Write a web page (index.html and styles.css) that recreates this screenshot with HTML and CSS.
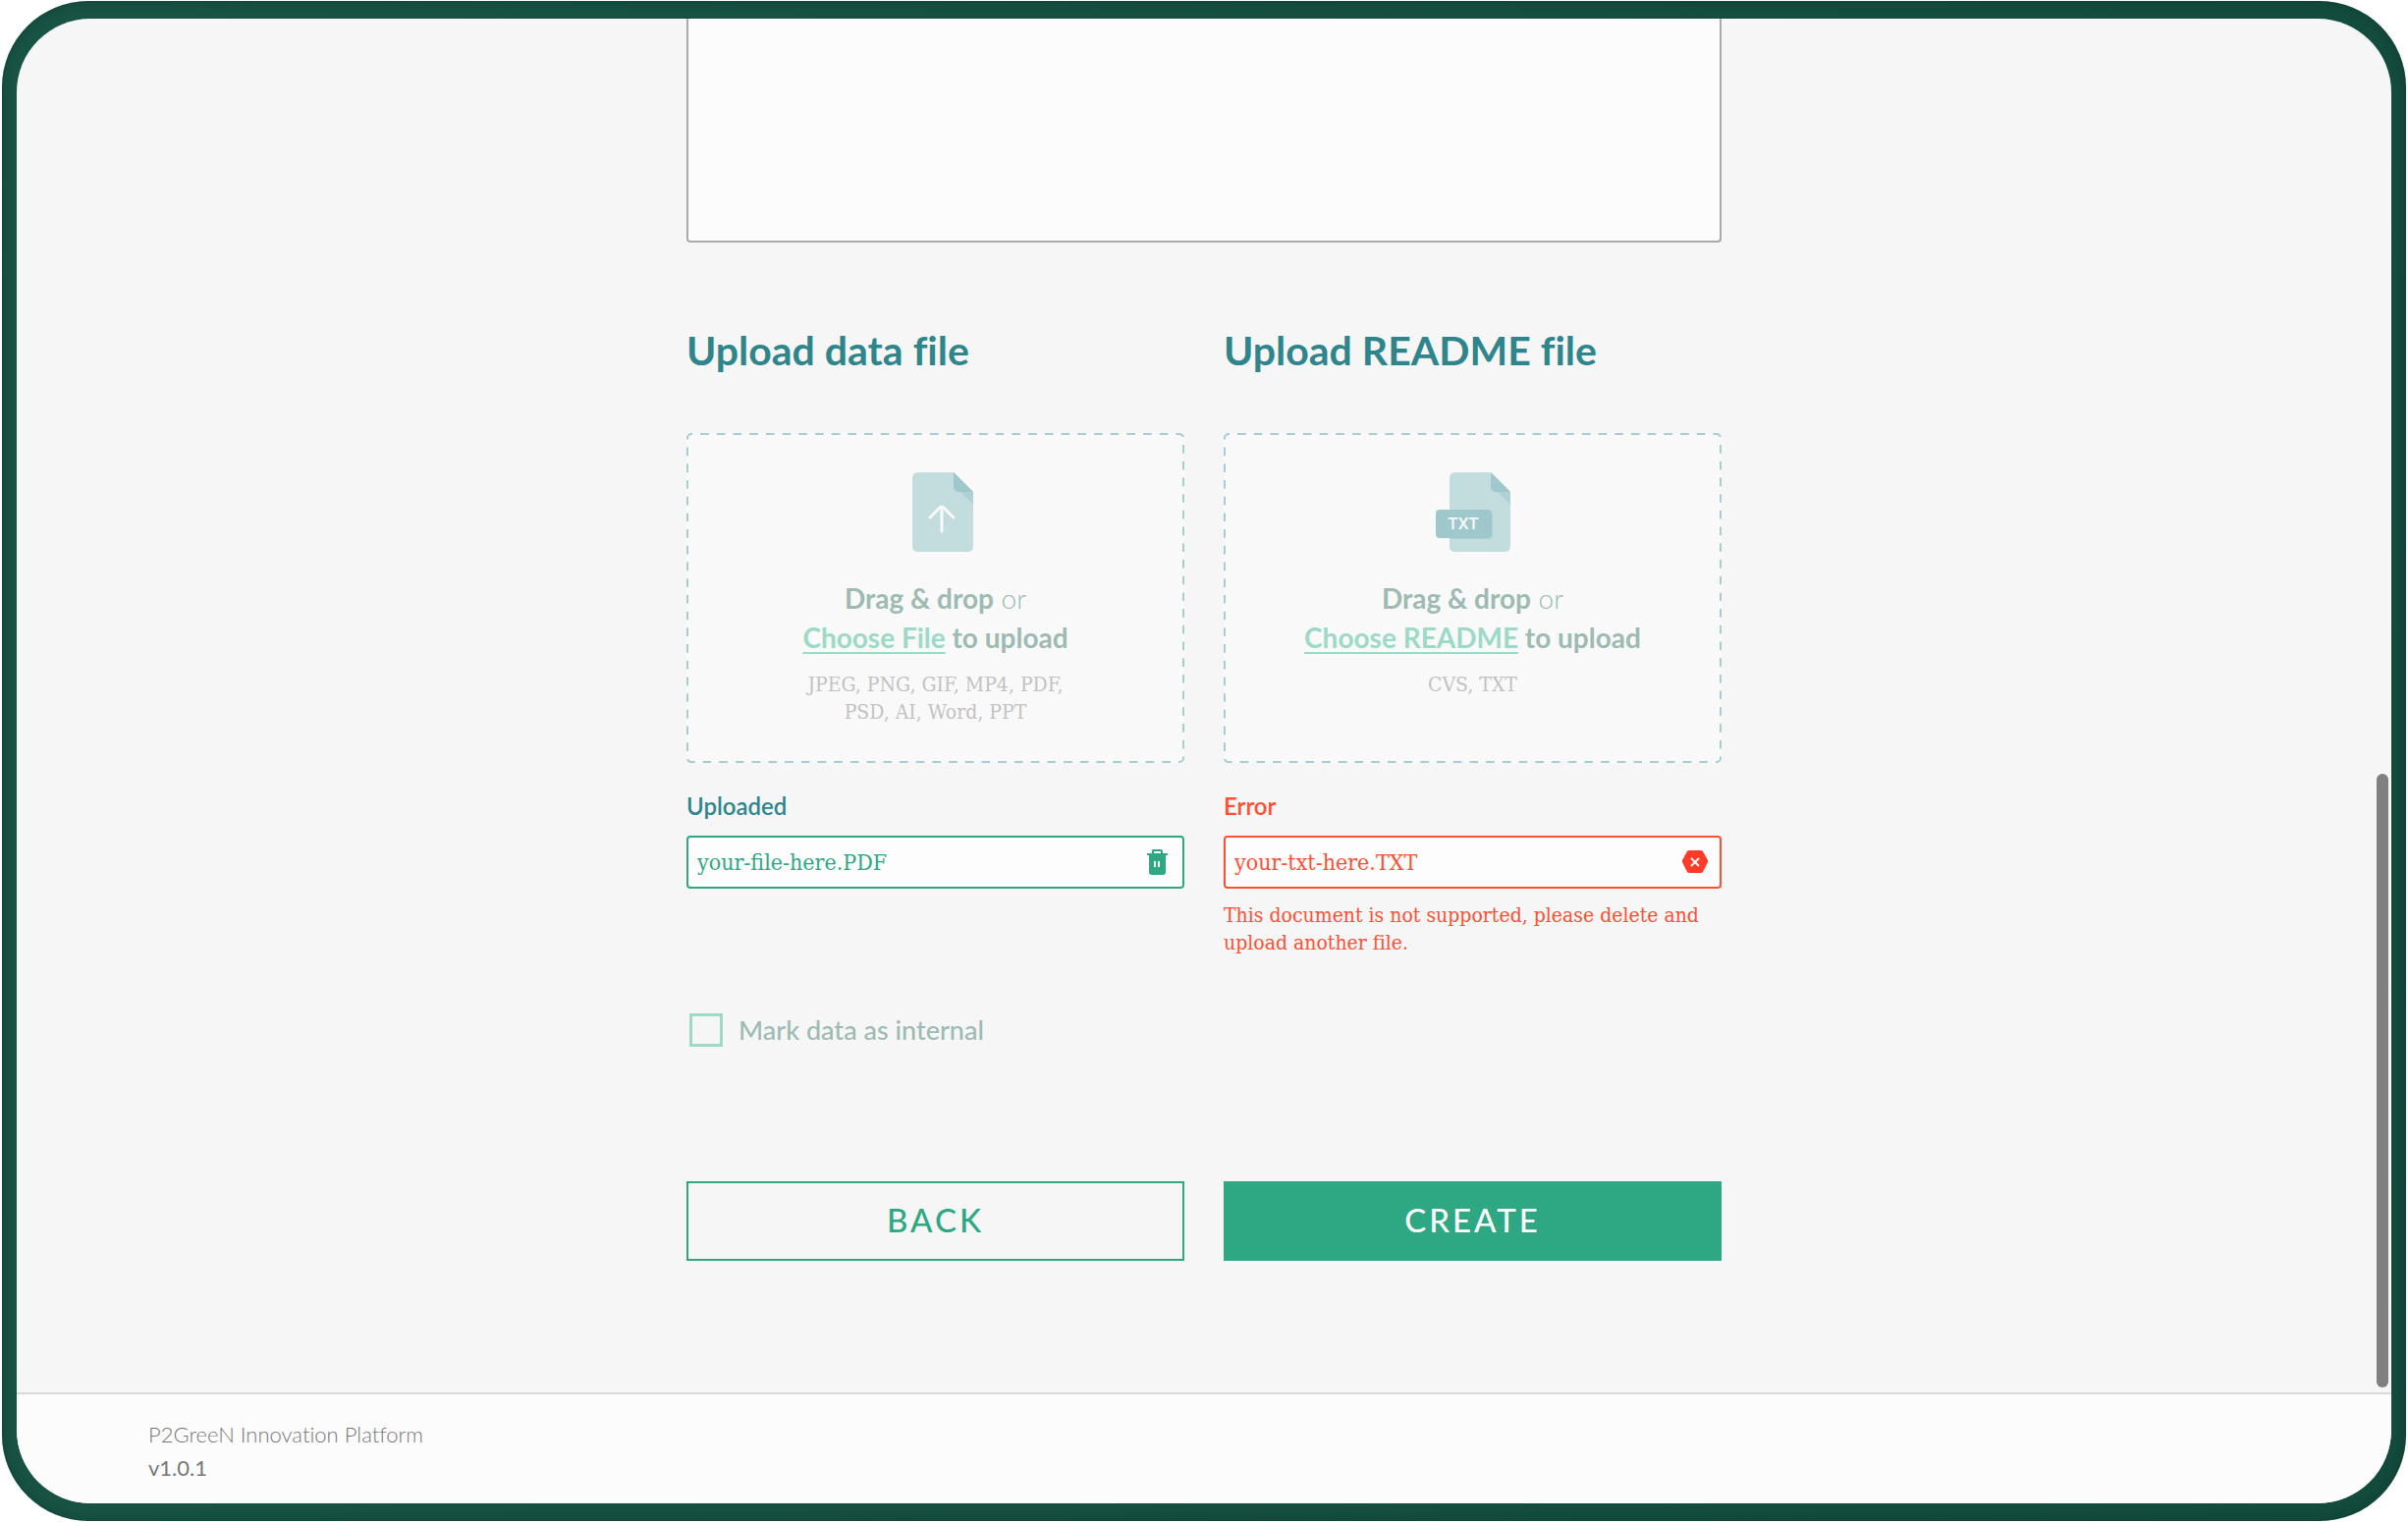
FILE: index.html
```
<!DOCTYPE html>
<html lang="en">

<head>
    <meta charset="UTF-8">
    <meta name="viewport" content="width=device-width, initial-scale=1.0">
    <title>P2GreeN Innovation Platform</title>
    <link rel="stylesheet" href="styles.css">
</head>

<body>

    <div class="device">
        <div class="screen">

            <main class="content">
                <form class="form">
                    <textarea class="description" aria-label="Description"></textarea>

                    <div class="uploads">
                        <!-- Data file -->
                        <section class="upload">
                            <h2>Upload data file</h2>
                            <div class="dropzone">
                                <svg class="dashes" aria-hidden="true">
                                    <rect x="1" y="1" rx="4" pathLength="100" />
                                </svg>
                                <svg class="file-icon" viewBox="-14 0 104 81" aria-hidden="true">
                                    <path class="sheet" d="M20 0H56L76 20V75Q76 81 70 81H20Q14 81 14 75V6Q14 0 20 0Z" />
                                    <path class="shade" d="M62 19L76 33V20Z" />
                                    <path class="fold" d="M56 0L76 20H62Q56 20 56 14Z" />
                                    <path class="arrow" d="M44 60V36M32 46L42 36Q44 34 46 36L56 46" />
                                </svg>
                                <p class="drop-text"><strong>Drag &amp; drop</strong> or<br>
                                    <strong><a href="#">Choose File</a> to upload</strong></p>
                                <p class="formats">JPEG, PNG, GIF, MP4, PDF,<br>PSD, AI, Word, PPT</p>
                            </div>
                            <label class="field-label" for="dataFile">Uploaded</label>
                            <div class="field">
                                <input type="text" id="dataFile" value="your-file-here.PDF" readonly>
                                <button type="button" class="icon-button" aria-label="Delete file">
                                    <svg width="26" height="26" viewBox="0 0 26 26">
                                        <path fill="currentColor" fill-rule="evenodd" d="M8 0H16Q18 0 18 2V4H23V6H21V23Q21 26 18 26H7Q4 26 4 23V6H2V4H7V2Q7 0 8 0ZM9 2V4H16V2ZM9 12V18H11V12ZM13 12V18H15V12Z" />
                                    </svg>
                                </button>
                            </div>
                        </section>

                        <!-- README file -->
                        <section class="upload">
                            <h2>Upload README file</h2>
                            <div class="dropzone">
                                <svg class="dashes" aria-hidden="true">
                                    <rect x="1" y="1" rx="4" pathLength="100" />
                                </svg>
                                <svg class="file-icon" viewBox="-14 0 104 81" aria-hidden="true">
                                    <path class="sheet" d="M20 0H56L76 20V75Q76 81 70 81H20Q14 81 14 75V6Q14 0 20 0Z" />
                                    <path class="shade" d="M62 19L76 33V20Z" />
                                    <path class="fold" d="M56 0L76 20H62Q56 20 56 14Z" />
                                    <path class="shade" d="M14 66H57V40L58 42V65Q58 68 54 68H14Z" />
                                    <rect class="fold" x="0" y="38" width="57" height="29" rx="4" />
                                    <text x="28" y="58">TXT</text>
                                </svg>
                                <p class="drop-text"><strong>Drag &amp; drop</strong> or<br>
                                    <strong><a href="#">Choose README</a> to upload</strong></p>
                                <p class="formats">CVS, TXT</p>
                            </div>
                            <label class="field-label error" for="readmeFile">Error</label>
                            <div class="field error">
                                <input type="text" id="readmeFile" value="your-txt-here.TXT" readonly>
                                <button type="button" class="icon-button" aria-label="Remove file">
                                    <svg width="26" height="26" viewBox="0 0 26 26">
                                        <path fill="currentColor" d="M7 1H19Q20 1 21 2L26 11Q26 12 26 13L21 23Q20 24 19 24H7Q6 24 5 23L0 13Q0 12 0 11L5 2Q6 1 7 1Z" />
                                        <path stroke="#fcfcfc" stroke-width="2" d="M9 9L17 17M17 9L9 17" />
                                    </svg>
                                </button>
                            </div>
                            <p class="message">This document is not supported, please delete and upload another file.</p>
                        </section>
                    </div>

                    <div class="check">
                        <input type="checkbox" id="internal">
                        <label for="internal">Mark data as internal</label>
                    </div>

                    <div class="actions">
                        <button type="button" class="btn">BACK</button>
                        <button type="submit" class="btn btn-primary">CREATE</button>
                    </div>
                </form>

                <div class="scroll-thumb"></div>
            </main>

            <footer class="footer">
                <p class="platform">P2GreeN Innovation Platform</p>
                <p>v1.0.1</p>
            </footer>

        </div>
    </div>

</body>

</html>
```
FILE: styles.css
```
* {
    margin: 0;
    padding: 0;
    box-sizing: border-box;
}

body {
    min-height: 100vh;
    padding: 1px 2px;
    display: flex;
    background-color: #fff;
    font-family: Lato, sans-serif;
    font-variant-ligatures: none;
}

.device {
    flex: 1;
    display: flex;
    padding: 18px 15px;
    border-radius: 88px;
    background: linear-gradient(100deg, #185344, #124a3c);
    box-shadow: inset 0 0 8px rgba(16, 56, 46, 0.7);
}

.screen {
    flex: 1;
    display: flex;
    flex-direction: column;
    overflow: hidden;
    border-radius: 75px;
    background-color: #f6f6f6;
}

.content {
    position: relative;
    flex: 1;
    padding: 0 40px;
}

.form {
    max-width: 1054px;
    margin: 0 auto;
}

.description {
    display: block;
    width: 100%;
    height: 228px;
    border: 2px solid #aaa;
    border-top: none;
    border-radius: 0 0 4px 4px;
    background-color: #fcfcfc;
    resize: none;
}

.uploads,
.actions {
    display: grid;
    grid-template-columns: 1fr 1fr;
    gap: 40px;
}

.uploads {
    margin-top: 80px;
}

.upload h2 {
    margin-bottom: 54px;
    font-size: 41px;
    line-height: 60px;
    font-weight: 700;
    color: #2f858c;
}

/* Drop area */
.dropzone {
    position: relative;
    height: 336px;
    padding-top: 40px;
    text-align: center;
    background-color: #f9f9f9;
    border-radius: 4px;
}

.dashes {
    position: absolute;
    inset: 0;
    width: 100%;
    height: 100%;
    pointer-events: none;
}

.dashes rect {
    width: calc(100% - 2px);
    height: calc(100% - 2px);
    fill: none;
    stroke: #a6cdd1;
    stroke-width: 2px;
    stroke-dasharray: 0.52 0.48;
    stroke-dashoffset: 0.46;
}

.file-icon {
    display: block;
    width: 104px;
    height: 81px;
    margin: 0 auto 27px;
}

.sheet {
    fill: #c3dcde;
}

.shade {
    fill: #b0d1d4;
}

.fold {
    fill: #9fc8cc;
}

.arrow {
    fill: none;
    stroke: #f9f9f9;
    stroke-width: 3;
    stroke-linecap: round;
}

.file-icon text {
    font-family: Roboto, sans-serif;
    font-size: 17px;
    font-weight: 500;
    text-anchor: middle;
    fill: #f9f9f9;
}

.drop-text {
    font-size: 28px;
    line-height: 40px;
    font-weight: 300;
    color: #9dbab3;
}

.drop-text strong {
    font-weight: 700;
}

.drop-text a {
    color: #9cd9c7;
    text-decoration: underline;
    text-decoration-thickness: 2px;
    text-underline-offset: 4px;
    text-decoration-skip-ink: none;
}

.formats {
    margin-top: 14px;
    font-family: "DejaVu Serif Condensed", "Liberation Serif", serif;
    font-size: 21px;
    line-height: 28px;
    color: #c2c2c2;
}

/* File name rows */
.field-label {
    display: block;
    margin: 28px 0 14px;
    font-size: 24px;
    line-height: 32px;
    font-weight: 600;
    color: #2f858c;
}

.field {
    display: flex;
    align-items: center;
    height: 54px;
    padding: 0 12px 0 9px;
    border: 2px solid #2ea883;
    border-radius: 4px;
    background-color: #fdfdfd;
    color: #2ea883;
}

.field input {
    flex: 1;
    min-width: 0;
    border: none;
    background: none;
    font-family: "DejaVu Serif Condensed", "Liberation Serif", serif;
    font-size: 23px;
    color: inherit;
    outline: none;
}

.icon-button {
    display: flex;
    border: none;
    background: none;
    color: inherit;
    cursor: pointer;
}

.field-label.error,
.field.error,
.message {
    color: #fd4f34;
}

.field.error {
    border-color: #fd4f34;
}

.field.error .icon-button {
    color: #fd3b28;
}

.message {
    margin-top: 13px;
    font-family: "DejaVu Serif Condensed", "Liberation Serif", serif;
    font-size: 21px;
    line-height: 28px;
}

/* Internal flag */
.check {
    display: flex;
    align-items: center;
    gap: 16px;
    margin: 57px 0 136px 3px;
}

.check input {
    appearance: none;
    width: 34px;
    height: 34px;
    border: 3px solid #9cd9c7;
}

.check label {
    font-size: 27px;
    line-height: 36px;
    font-weight: 500;
    color: #9dbab3;
}

/* Buttons */
.btn {
    height: 81px;
    padding-bottom: 3px;
    border: 2px solid #2ea883;
    background: none;
    font-family: inherit;
    font-size: 33px;
    font-weight: 500;
    letter-spacing: 3px;
    color: #2ea883;
    cursor: pointer;
}

.btn-primary {
    background-color: #2ea883;
    color: #fcfcfc;
}

/* Scroll position indicator */
.scroll-thumb {
    position: absolute;
    top: 55%;
    right: 3px;
    bottom: 5px;
    width: 12px;
    border-radius: 6px;
    background-color: #808080;
}

.footer {
    padding: 24px 134px 19px;
    border-top: 2px solid #d9d9d9;
    background-color: #fcfcfc;
    font-size: 22px;
    line-height: 34px;
    color: #777;
}

.platform {
    font-weight: 300;
}
```
